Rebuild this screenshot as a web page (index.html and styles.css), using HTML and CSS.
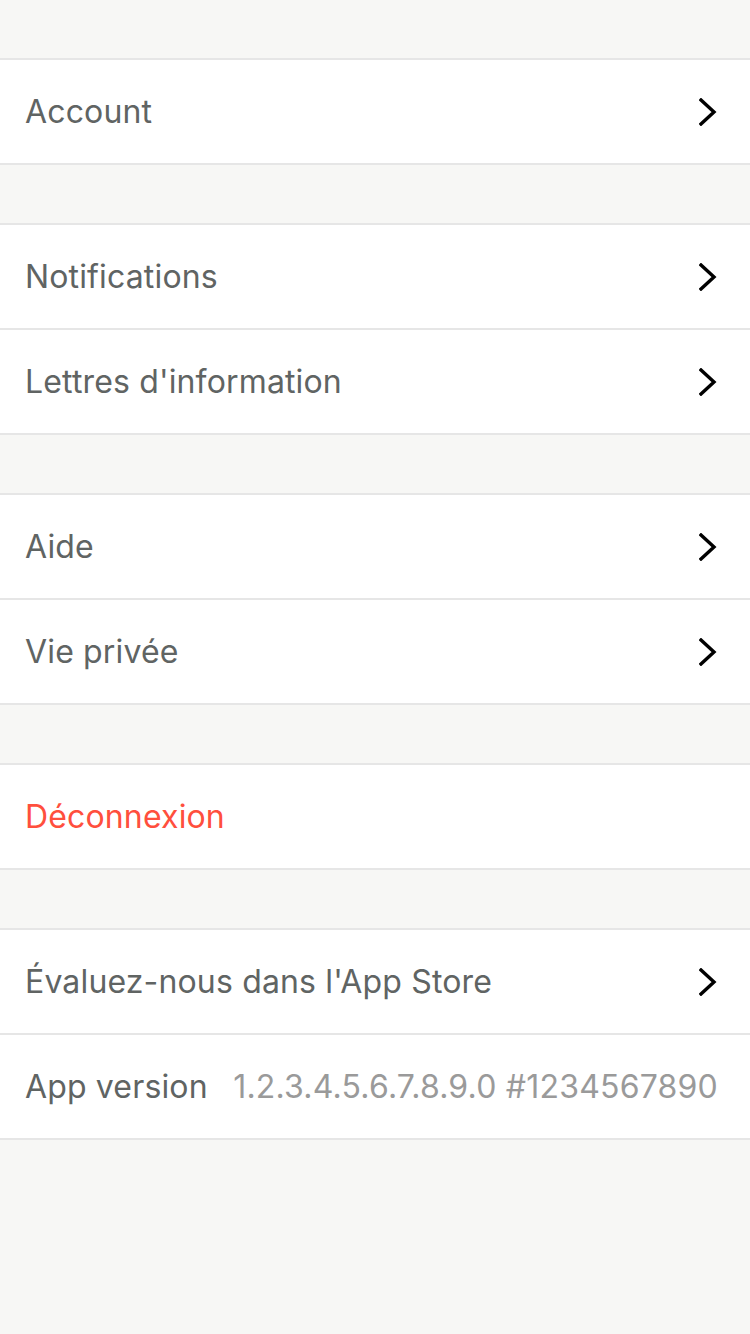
FILE: index.html
```html
<!DOCTYPE html>
<html lang="fr">
<head>
<meta charset="utf-8">
<title>Réglages</title>
<link rel="stylesheet" href="styles.css">
</head>
<body>
<main class="settings">
  <section class="group">
    <div class="row"><span class="label">Account</span><svg class="chev" viewBox="0 0 18 28"><path d="M2 2 L15 14 L2 26"/></svg></div>
  </section>
  <section class="group">
    <div class="row"><span class="label">Notifications</span><svg class="chev" viewBox="0 0 18 28"><path d="M2 2 L15 14 L2 26"/></svg></div>
    <div class="row"><span class="label">Lettres d'information</span><svg class="chev" viewBox="0 0 18 28"><path d="M2 2 L15 14 L2 26"/></svg></div>
  </section>
  <section class="group">
    <div class="row"><span class="label">Aide</span><svg class="chev" viewBox="0 0 18 28"><path d="M2 2 L15 14 L2 26"/></svg></div>
    <div class="row"><span class="label">Vie privée</span><svg class="chev" viewBox="0 0 18 28"><path d="M2 2 L15 14 L2 26"/></svg></div>
  </section>
  <section class="group">
    <div class="row"><span class="label danger">Déconnexion</span></div>
  </section>
  <section class="group">
    <div class="row"><span class="label">Évaluez-nous dans l'App Store</span><svg class="chev" viewBox="0 0 18 28"><path d="M2 2 L15 14 L2 26"/></svg></div>
    <div class="row"><span class="label">App version</span><span class="value">1.2.3.4.5.6.7.8.9.0 #1234567890</span></div>
  </section>
</main>
</body>
</html>
```
FILE: styles.css
```css
html, body {
  margin: 0;
  padding: 0;
  background: #f7f7f5;
}
body {
  width: 750px;
  height: 1334px;
  font-family: Inter, "Liberation Sans", Arial, sans-serif;
  -webkit-font-smoothing: antialiased;
}
.settings {
  display: flex;
  flex-direction: column;
  gap: 58px;
  padding-top: 58px;
}
.group {
  background: #fff;
  border-top: 2px solid #e6e6e6;
  border-bottom: 2px solid #e6e6e6;
  display: flex;
  flex-direction: column;
}
.row {
  height: 103px;
  display: flex;
  align-items: center;
  justify-content: space-between;
  padding: 0 33px 0 25px;
  box-sizing: border-box;
}
.row + .row {
  border-top: 2px solid #e6e6e6;
  height: 105px;
}
.label {
  font-size: 32px;
  color: #606463;
  letter-spacing: 0.15px;
}
.label.danger {
  color: #ff4f3d;
}
.value {
  font-size: 32px;
  color: #9a9a9a;
  letter-spacing: 0.2px;
}
.row:has(.value) {
  padding-right: 32px;
}
.chev {
  width: 18px;
  height: 28px;
  fill: none;
  stroke: #000;
  stroke-width: 3.4;
  stroke-linecap: square;
  stroke-linejoin: miter;
}
```
